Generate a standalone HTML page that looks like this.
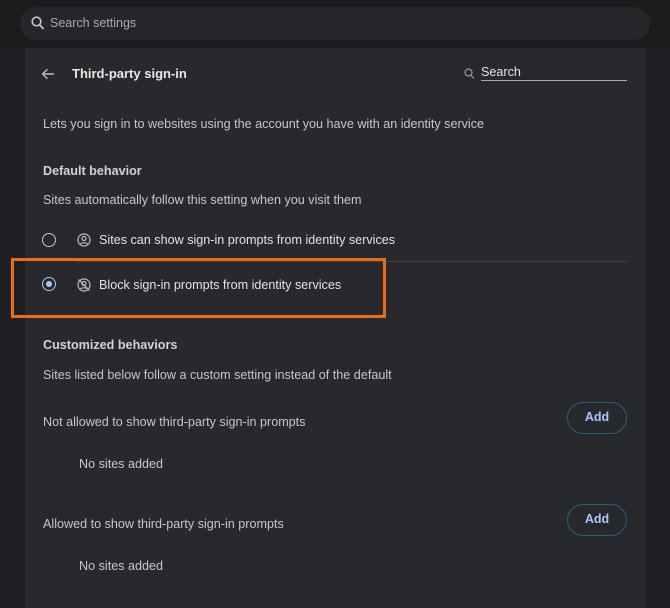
<!DOCTYPE html>
<html><head><style>
*{margin:0;padding:0;box-sizing:border-box}
body{width:670px;height:606px;background:#1f2023;font-family:"Liberation Sans",sans-serif;color:#e3e3e3;position:relative;overflow:hidden;font-size:12.6px}
.top{position:absolute;left:0;top:0;width:670px;height:48px;background:#1b1c1e}
.pill{position:absolute;left:20px;top:7px;width:630px;height:33px;border-radius:17px;background:#252629}
.pill span{position:absolute;left:30px;top:9px;color:#a8abb0;font-size:12.5px}
.card{position:absolute;left:25px;top:48px;width:620px;height:560px;background:#28292c}
.t{position:absolute;white-space:nowrap}
.sec{color:#c4c7cc}
.btn{position:absolute;left:542px;width:60px;height:32px;border:1.5px solid #2a5f7a;border-radius:16px;color:#a8c7fa;font-weight:bold;font-size:12.5px;text-align:center;line-height:29px}
</style></head><body>
<div class="top"><div class="pill">
<svg style="position:absolute;left:11px;top:9px" width="14" height="15" viewBox="0 0 14 15"><circle cx="5.5" cy="5.5" r="4.3" fill="none" stroke="#c4c7cc" stroke-width="1.6"/><line x1="8.6" y1="8.8" x2="12.5" y2="13" stroke="#c4c7cc" stroke-width="1.7"/></svg>
<span>Search settings</span></div></div>
<div class="card">
<svg style="position:absolute;left:16px;top:20px" width="14" height="12" viewBox="0 0 14 12"><path d="M13 6H2M6.5 1.2L1.5 6l5 4.8" fill="none" stroke="#bbb" stroke-width="1.4"/></svg>
<div class="t" style="left:47px;top:18px;font-size:13px;font-weight:bold;color:#e8e8e8">Third-party sign-in</div>
<svg style="position:absolute;left:439px;top:20px" width="11" height="12" viewBox="0 0 11 12"><circle cx="4.5" cy="4.5" r="3.5" fill="none" stroke="#999" stroke-width="1.2"/><line x1="7" y1="7.3" x2="10" y2="10.5" stroke="#999" stroke-width="1.2"/></svg>
<div class="t" style="left:456px;top:17px;color:#e3e3e3">Search</div>
<div style="position:absolute;left:456px;top:32px;width:146px;height:1px;background:#aaa"></div>
<div class="t sec" style="left:18px;top:69px">Lets you sign in to websites using the account you have with an identity service</div>
<div class="t" style="left:18px;top:116px;font-weight:bold;color:#d0d3d8">Default behavior</div>
<div class="t sec" style="left:18px;top:145px">Sites automatically follow this setting when you visit them</div>
<div style="position:absolute;left:17px;top:185px;width:14px;height:14px;border:1.5px solid #c4c7cc;border-radius:50%"></div>
<svg style="position:absolute;left:52px;top:185px" width="14" height="14" viewBox="0 0 14 14"><circle cx="7" cy="7" r="6" fill="none" stroke="#bbb" stroke-width="1.2"/><circle cx="7" cy="5.5" r="2" fill="none" stroke="#bbb" stroke-width="1.2"/><path d="M3.3 11c1-1.6 6.4-1.6 7.4 0" fill="none" stroke="#bbb" stroke-width="1.2"/></svg>
<div class="t" style="left:74px;top:185px;color:#e3e3e3">Sites can show sign-in prompts from identity services</div>
<div style="position:absolute;left:52px;top:213px;width:550px;height:1px;background:#3c3d40"></div>
<div style="position:absolute;left:17px;top:229px;width:14px;height:14px;border:1.5px solid #a8c7fa;border-radius:50%"><div style="position:absolute;left:2.5px;top:2.5px;width:6px;height:6px;border-radius:50%;background:#a8c7fa"></div></div>
<svg style="position:absolute;left:52px;top:230px" width="14" height="14" viewBox="0 0 14 14"><circle cx="7" cy="7" r="6" fill="none" stroke="#bbb" stroke-width="1.2"/><circle cx="7" cy="5.5" r="2" fill="none" stroke="#bbb" stroke-width="1.2"/><path d="M3.3 11c1-1.6 6.4-1.6 7.4 0" fill="none" stroke="#bbb" stroke-width="1.2"/><line x1="1.5" y1="1.5" x2="12.5" y2="12.5" stroke="#bbb" stroke-width="1.2"/></svg>
<div class="t" style="left:74px;top:230px;color:#e3e3e3">Block sign-in prompts from identity services</div>
<div class="t" style="left:18px;top:290px;font-weight:bold;color:#d0d3d8">Customized behaviors</div>
<div class="t sec" style="left:18px;top:320px">Sites listed below follow a custom setting instead of the default</div>
<div class="t sec" style="left:18px;top:367px">Not allowed to show third-party sign-in prompts</div>
<div class="btn" style="top:354px">Add</div>
<div class="t sec" style="left:54px;top:409px">No sites added</div>
<div class="t sec" style="left:18px;top:469px">Allowed to show third-party sign-in prompts</div>
<div class="btn" style="top:456px">Add</div>
<div class="t sec" style="left:54px;top:511px">No sites added</div>
</div>
<div style="position:absolute;left:11px;top:258px;width:375px;height:60px;border:3px solid #f26b0f"></div>
</body></html>
